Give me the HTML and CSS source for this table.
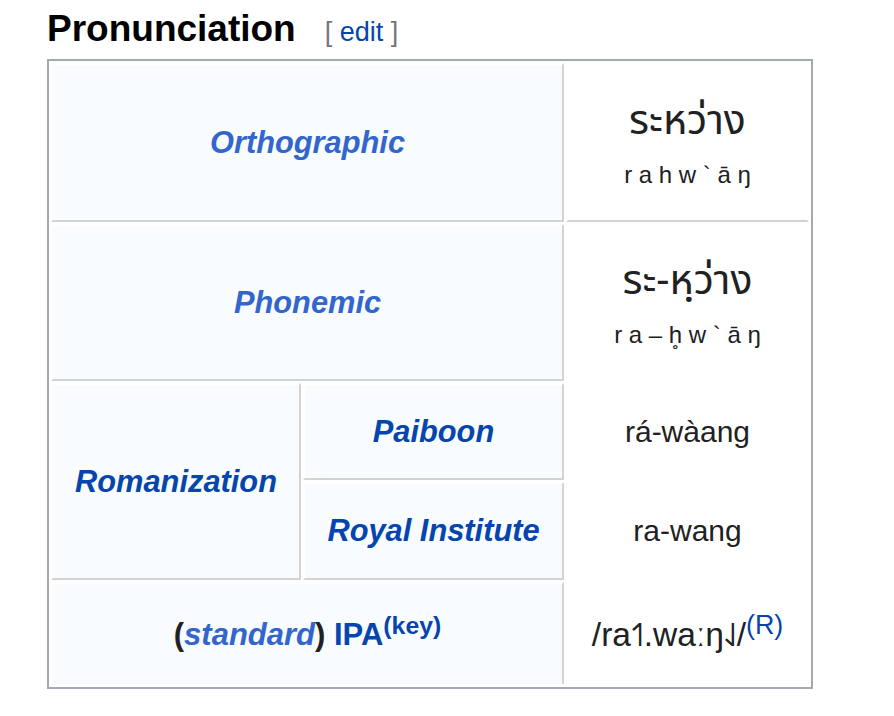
FILE: index.html
```html
<!DOCTYPE html>
<html lang="en">
<head>
<meta charset="utf-8">
<title>Pronunciation</title>
<link rel="stylesheet" href="styles.css">
</head>
<body>
<div class="page">
  <h3 class="heading">
    <span class="headline">Pronunciation</span>
    <span class="editsection"><span class="bracket">[</span> <a class="link" href="#">edit</a> <span class="bracket">]</span></span>
  </h3>
  <table class="pron">
    <colgroup><col class="col-a"><col class="col-b"><col class="col-c"></colgroup>
    <tr class="row1">
      <th colspan="2" class="hdr"><a class="lnk-light it" href="#">Orthographic</a></th>
      <td class="data data-line"><div class="thai">ระหว่าง</div><div class="tr">r a h w ` ā ŋ</div></td>
    </tr>
    <tr class="row2">
      <th colspan="2" class="hdr"><a class="lnk-light it" href="#">Phonemic</a></th>
      <td class="data"><div class="thai">ระ-หฺว่าง</div><div class="tr">r a – h̥ w ` ā ŋ</div></td>
    </tr>
    <tr class="row3">
      <th rowspan="2" class="hdr"><a class="lnk it" href="#">Romanization</a></th>
      <th class="hdr"><a class="lnk it" href="#">Paiboon</a></th>
      <td class="data roman">rá-wàang</td>
    </tr>
    <tr class="row4">
      <th class="hdr"><a class="lnk it" href="#">Royal Institute</a></th>
      <td class="data roman">ra-wang</td>
    </tr>
    <tr class="row5">
      <th colspan="2" class="hdr ipa-hdr">(<a class="lnk-light it" href="#">standard</a>) <a class="lnk" href="#">IPA</a><sup><a class="lnk" href="#">(key)</a></sup></th>
      <td class="data ipa">/ra˦˥.waːŋ˨˩/<sup><a class="lnk normal" href="#">(R)</a></sup></td>
    </tr>
  </table>
</div>
</body>
</html>
```

FILE: styles.css
```css
html, body {
  margin: 0;
  padding: 0;
  background: #ffffff;
}

body {
  font-family: "Liberation Sans", Arial, sans-serif;
  color: #202122;
}

.page {
  padding: 0 0 0 47px;
}

.heading {
  display: flex;
  align-items: baseline;
  margin: 8px 0 6px 0;
  line-height: 42px;
  font-weight: bold;
}

.headline {
  font-size: 37px;
  color: #000000;
}

.editsection {
  margin-left: 29px;
  font-size: 27px;
  font-weight: normal;
}

.bracket {
  color: #72777d;
}

a {
  text-decoration: none;
}

.link, .lnk {
  color: #0645ad;
}

.lnk-light {
  color: #3366cc;
}

.it {
  font-style: italic;
}

.normal {
  font-weight: normal;
}

.pron {
  border-collapse: separate;
  border-spacing: 2px;
  border: 2px solid #a2a9b1;
  table-layout: fixed;
  width: 766px;
  background: #ffffff;
  font-size: 30px;
}

.col-a { width: 250px; }
.col-b { width: 261px; }
.col-c { width: 243px; }

.pron th, .pron td {
  padding: 0;
  text-align: center;
  vertical-align: middle;
  border: 2px solid #ffffff;
}

.hdr {
  background: #f8fcfe;
  border-right-color: #d3d3d3 !important;
  border-bottom-color: #d3d3d3 !important;
  font-weight: bold;
  font-size: 30.8px;
}

.row5 .hdr {
  border-bottom-color: #f8fcfe !important;
}

.ipa-hdr {
  font-size: 31px;
}

.data {
  background: #ffffff;
  font-weight: normal;
}

.data-line {
  border-bottom-color: #d3d3d3 !important;
}

.row1 { height: 159px; }
.row2 { height: 157px; }
.row3 { height: 97px; }
.row4 { height: 98px; }
.row5 { height: 103px; }

.thai {
  font-family: "Tahoma", "Noto Sans Thai", "Leelawadee UI", "DejaVu Sans", sans-serif;
  font-size: 41px;
  line-height: 52px;
  color: #202122;
}

.tr {
  font-size: 24px;
  line-height: 32px;
  margin-top: 12px;
}

sup {
  font-size: 80%;
  line-height: 1;
  vertical-align: super;
}

.ipa {
  font-size: 33.5px;
}
```
